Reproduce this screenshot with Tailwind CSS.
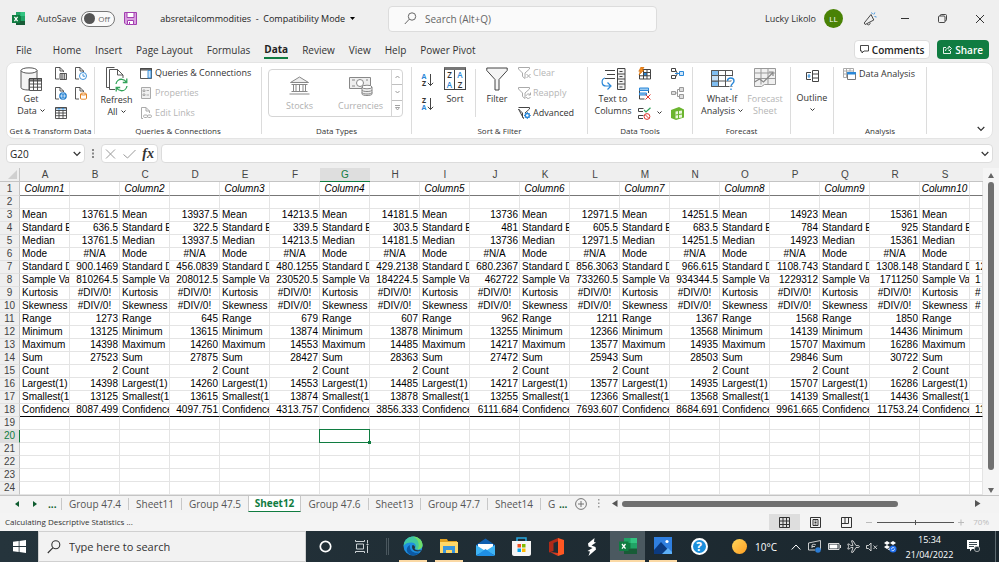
<!DOCTYPE html>
<html lang="en">
<head>
    <meta charset="UTF-8">
    <meta name="viewport" content="width=device-width, initial-scale=1.0">
    <title>absretailcommodities - Excel</title>
    <!-- Tailwind CSS -->
    <script src="https://cdn.jsdelivr.net/npm/@tailwindcss/browser@4"></script>
</head>
<body class="min-h-screen flex flex-col overflow-hidden bg-[#efefef] font-['Open_Sans','Noto_Sans',sans-serif] text-[#333] text-[9px] leading-3">

    <!-- Title bar -->
    <header class="flex items-center h-[37px] shrink-0">
        <div class="flex items-center w-[388px] shrink-0 pl-3">
            <svg class="w-[13px] h-[13px]" viewBox="0 0 13 13"><path fill="#21a366" d="M4 0h9v13H4z"/><path fill="#33c481" d="M8.5 0H13v4H8.5z"/><path fill="#107c41" d="M4 4h5v5H4z"/><path fill="#185c37" d="M4 9h9v4H4z"/><path fill="#107c41" d="M0 3h8v8H0z"/><path stroke="#fff" stroke-width="1.2" d="M2.400 4.800l3.200 4.400M5.600 4.800L2.400 9.200"/></svg>
            <label for="autosave" class="ml-3">AutoSave</label>
            <button id="autosave" role="switch" aria-checked="false" class="ml-[5px] flex items-center gap-[3px] w-[34px] h-4 px-[2px] rounded-full border border-[#777] bg-[#fafafa] text-[#666] text-[8px]"><span class="w-[11px] h-[11px] rounded-full bg-[#555]"></span>Off</button>
            <button class="ml-[9px]" aria-label="Save"><svg class="w-[13px] h-[13px]" viewBox="0 0 13 13"><path fill="#d9a0e0" stroke="#a33fb0" d="M.5.5h12v12H2L.5 11z"/><path fill="#fff" stroke="#a33fb0" d="M3 .5h7v5H3zM3.500 8.500h6v4h-6z"/><path stroke="#a33fb0" d="M5.500 10v2.500"/></svg></button>
            <button class="ml-[23px] flex items-center gap-[5px] whitespace-nowrap text-[#222]"><span>absretailcommodities&nbsp; -&nbsp; Compatibility Mode</span><svg class="w-[5px] h-[3px]" viewBox="0 0 5 3"><path d="M0 0h5L2.500 3z"/></svg></button>
        </div>
        <div class="flex items-center flex-1 max-w-[269px] h-[26px] rounded-sm border border-[#dcdcdc] bg-[#fafafa] pl-[15px]">
            <svg class="w-[13px] h-[13px] shrink-0" viewBox="0 0 13 13" fill="none" stroke="#666"><circle cx="8" cy="4.500" r="3.700"/><path d="M5.300 7.200L.8 12"/></svg>
            <input type="text" aria-label="Search" placeholder="Search (Alt+Q)" class="ml-2 flex-1 min-w-0 text-[10px] placeholder:text-[#666] outline-none">
        </div>
        <div class="ml-auto flex items-center pr-[14px]">
            <span>Lucky Likolo</span>
            <span class="ml-2 flex items-center justify-center w-[19px] h-[19px] rounded-full bg-[#498205] text-white text-[8px]">LL</span>
            <button class="ml-5" aria-label="Coming soon"><svg class="w-[14px] h-[14px]" viewBox="0 0 14 14" fill="none" stroke="#333" stroke-width=".9"><path d="M8 2.500L1.200 11l1 1.500L10.800 8zM4 12c1 1.600 3.500.8 3-1.300"/><path stroke="#2b88d8" d="M8.500.5l1 1.500M11.800.5l-1 2M11.500 4.500l2 .500"/></svg></button>
            <button class="ml-[23px]" aria-label="Minimize"><svg class="w-[10px] h-[10px]" viewBox="0 0 10 10" stroke="#333"><path d="M1 4.500h8"/></svg></button>
            <button class="ml-7" aria-label="Restore"><svg class="w-[9px] h-[9px]" viewBox="0 0 9 9" fill="none" stroke="#333" stroke-width=".9"><rect x=".5" y="2" width="6.500" height="6.500" rx="1"/><path d="M2.200 2V1.500c0-.6.4-1 1-1h4.300c.6 0 1 .4 1 1v4.300c0 .6-.4 1-1 1H7"/></svg></button>
            <button class="ml-7" aria-label="Close"><svg class="w-[10px] h-[10px]" viewBox="0 0 10 10" stroke="#333"><path d="M1 1l8 8M9 1L1 9"/></svg></button>
        </div>
    </header>

    <!-- Ribbon tabs -->
    <nav class="flex items-center h-[25px] shrink-0 pl-4 pr-[10px] gap-[14px] text-[10px] whitespace-nowrap">
        <a href="#" class="mr-[7px]">File</a>
        <a href="#">Home</a>
        <a href="#">Insert</a>
        <a href="#">Page Layout</a>
        <a href="#">Formulas</a>
        <a href="#" class="font-bold text-[#222] border-b-2 border-[#107c41] h-4 mt-[3px]">Data</a>
        <a href="#">Review</a>
        <a href="#">View</a>
        <a href="#">Help</a>
        <a href="#">Power Pivot</a>
        <button class="ml-auto flex items-center gap-[3px] h-[19px] px-[5px] rounded border border-[#ddd] bg-white font-semibold text-[#222]"><svg class="w-[9px] h-[9px]" viewBox="0 0 9 9" fill="none" stroke="#333" stroke-width=".9"><path d="M.5.5h8v5.500H4L2 8V6H.5z"/></svg>Comments</button>
        <button class="-ml-[7px] flex items-center gap-[3px] h-[19px] px-[6px] rounded bg-[#107c41] font-semibold text-white"><svg class="w-[9px] h-[9px]" viewBox="0 0 9 9" fill="none" stroke="#fff" stroke-width=".9"><path d="M3 2.500H.5v6h7V6M2.500 6c.2-2 1.300-3 3.500-3V1l2.500 2.600L6 6V4.500"/></svg>Share</button>
    </nav>

    <!-- Ribbon -->
    <section class="flex shrink-0 mx-[6px] h-[77px] rounded-lg border border-[#e4e4e4] bg-white leading-3 whitespace-nowrap overflow-hidden">
        <div class="w-[87px] shrink-0 flex flex-col">
            <div class="flex h-[60px]">
                <button class="flex flex-col items-center w-[48px] pt-1">
                    <svg class="w-[22px] h-[24px] mb-[2px]" viewBox="0 0 22 24" fill="none" stroke="#444" stroke-width=".9"><path fill="#f3f3f3" d="M1 3.500v17c0 1.500 3 2.500 8 2.500V12h8V3.500"/><ellipse cx="9" cy="3.500" rx="8" ry="2.700" fill="#fff"/><path fill="#fff" d="M9.500 11.500h12v12h-12z"/><path fill="#888" d="M9.500 11.500h12v2.500h-12z"/><path d="M9.500 17h12M9.500 20.200h12M13.500 12v11M17.500 12v11"/></svg>
                    <span>Get</span>
                    <span class="flex items-center gap-[3px]">Data <svg class="w-[5px] h-[4px]" viewBox="0 0 5 4" fill="none" stroke="#333"><path d="M.5.5l2 2 2-2"/></svg></span>
                </button>
                <div class="grid grid-cols-2 gap-x-2 gap-y-[7px] content-start pt-1">
                    <button aria-label="From Text/CSV"><svg class="w-3 h-[13px]" viewBox="0 0 12 13" fill="none" stroke="#444" stroke-width=".9"><path d="M4 12H.5V.5h4.500l3.500 3.500v1M5 .5V4h3.500"/><path fill="#ddd" d="M5 6.500h6.500v6H5z"/><path d="M7 6.500v6M9.300 6.500v6"/></svg></button>
                    <button aria-label="Recent Sources"><svg class="w-3 h-[13px]" viewBox="0 0 12 13" fill="none" stroke="#444" stroke-width=".9"><path d="M4 12H.5V.5h4.500l3.500 3.500v1M5 .5V4h3.500"/><circle cx="8" cy="9" r="3.500" fill="#fff" stroke="#2b88d8"/><path stroke="#2b88d8" d="M8 7v2.200h2"/></svg></button>
                    <button aria-label="From Web"><svg class="w-3 h-[13px]" viewBox="0 0 12 13" fill="none" stroke="#444" stroke-width=".9"><path d="M4 12H.5V.5h4.500l3.500 3.500v1M5 .5V4h3.500"/><circle cx="8" cy="9" r="3.500" fill="#2b88d8" stroke="#1f77c4"/><path stroke="#fff" stroke-width=".6" d="M4.500 9h7M8 5.500c-2 2-2 5 0 7c2-2 2-5 0-7"/></svg></button>
                    <button aria-label="Existing Connections"><svg class="w-3 h-[13px]" viewBox="0 0 12 13" fill="none" stroke="#444" stroke-width=".9"><path d="M4 12H.5V.5h4.500l3.500 3.500v1M5 .5V4h3.500"/><path fill="#fff" stroke="#e07000" d="M5.500 7v4.500c0 1 6 1 6 0V7"/><ellipse cx="8.500" cy="7" rx="3" ry="1" fill="#fff" stroke="#e07000"/></svg></button>
                    <button aria-label="From Table/Range"><svg class="w-3 h-[13px]" viewBox="0 0 12 13" fill="none" stroke="#444" stroke-width=".9"><path d="M.5.5h11v11H.5z"/><path fill="#c9e2f7" d="M.5 1h11v2.500H.5z"/><path d="M.5 6h11M.5 8.700h11M4 3.500v8M8 3.500v8"/><path fill="#2b88d8" stroke="none" d="M3 1h2L4 3zM7 1h2L8 3z"/></svg></button>
                </div>
            </div>
            <div class="text-center text-[8px] leading-[15px]">Get &amp; Transform Data</div>
        </div>
        <div class="w-px bg-[#dcdcdc] my-1 shrink-0"></div>

        <div class="w-[166px] shrink-0 flex flex-col">
            <div class="flex h-[60px]">
                <button class="flex flex-col items-center w-[43px] pt-1">
                    <svg class="w-[22px] h-[25px] mb-[2px]" viewBox="0 0 22 25" fill="none" stroke="#444" stroke-width=".9"><path d="M3.500 20.500h-3V.5h8M9 22.500H3.500v-20h8l5.500 5.500v3M11.500 2.500V8H17"/><path stroke="#33a35a" stroke-width="1.300" d="M10 17c.5-3 3-5 6-4.700 2 .2 3.500 1.200 4.500 3M20.800 11.500v4h-4M21 19c-.5 3-3 5-6 4.700-2-.2-3.500-1.200-4.500-3M10.200 24.500v-4h4"/></svg>
                    <span>Refresh</span>
                    <span class="flex items-center gap-[3px]">All <svg class="w-[5px] h-[4px]" viewBox="0 0 5 4" fill="none" stroke="#333"><path d="M.5.5l2 2 2-2"/></svg></span>
                </button>
                <div class="grid grid-rows-3 ml-[2px] items-center">
                    <button class="flex items-center gap-[3px]"><svg class="w-3 h-[11px]" viewBox="0 0 12 11" fill="none" stroke="#444" stroke-width=".9"><path d="M.5.5h11v10H.5z"/><path fill="#888" d="M.5.5h11v1.500H.5z"/><path fill="#cfe6fa" stroke="#2b88d8" d="M8 2.500h3v7.500H8z"/></svg>Queries &amp; Connections</button>
                    <button class="flex items-center gap-[3px] text-[#b5b5b5]" disabled><svg class="w-3 h-3" viewBox="0 0 12 12" fill="none" stroke="#aaa"><path fill="#f0f0f0" d="M1.500.5h9v11h-9z"/><path d="M3 3h2v1.500H3zM3 7h2v1.500H3zM6.500 3.500H9M6.500 8H9"/></svg>Properties</button>
                    <button class="flex items-center gap-[3px] text-[#b5b5b5]" disabled><svg class="w-3 h-3" viewBox="0 0 12 12" fill="none" stroke="#aaa"><path d="M3 11.500H1.500V.5h4.500l3.500 3.500v2M6 .5V4h3.500"/><rect x="3.500" y="8" width="4" height="2.500" rx="1.200"/><rect x="7.500" y="8" width="4" height="2.500" rx="1.200"/></svg>Edit Links</button>
                </div>
            </div>
            <div class="text-center text-[8px] leading-[15px]">Queries &amp; Connections</div>
        </div>
        <div class="w-px bg-[#dcdcdc] my-1 shrink-0"></div>

        <div class="w-[149px] shrink-0 flex flex-col">
            <div class="h-[60px] pt-[6px] pl-[6px]">
                <div class="flex w-[135px] h-[48px] rounded border border-[#d5d5d5] text-[#b0b0b0]">
                    <button class="flex flex-col items-center justify-end w-[61px] pb-1" disabled><svg class="w-[21px] h-[19px] mb-[5px]" viewBox="0 0 21 19" fill="none" stroke="#888"><path fill="#eee" d="M1.500 6.500L10.500 1l9 5.500z"/><path d="M2.500 8.500h16M4.500 9v6M7 9v6M10.500 9v6M14 9v6M16.500 9v6M2.500 15.500h16M.5 18h20"/></svg>Stocks</button>
                    <button class="flex flex-col items-center justify-end w-[61px] pb-1" disabled><svg class="w-[24px] h-[20px] mb-1" viewBox="0 0 24 20" fill="none" stroke="#888"><path fill="#eee" d="M.5 1.500h21v11H.5z"/><circle cx="11" cy="7" r="3.500" fill="#fff"/><path d="M3 4h3M3 10h3M17 4h2"/><path fill="#eee" d="M13 11v7c0 2 10 2 10 0v-7"/><ellipse cx="18" cy="11" rx="5" ry="1.800" fill="#fff"/><path d="M13 14c0 2 10 2 10 0M13 16.500c0 2 10 2 10 0"/></svg>Currencies</button>
                    <div class="flex-1 grid grid-rows-3 border-l border-[#d5d5d5] divide-y divide-[#c0c0c0]">
                        <button class="flex items-center justify-center" aria-label="Previous row"><svg class="w-[5px] h-[4px]" viewBox="0 0 5 4" fill="none" stroke="#999"><path d="M.5 3l2-2 2 2"/></svg></button>
                        <button class="flex items-center justify-center" aria-label="Next row"><svg class="w-[5px] h-[4px]" viewBox="0 0 5 4" fill="none" stroke="#999"><path d="M.5 1l2 2 2-2"/></svg></button>
                        <button class="flex items-center justify-center" aria-label="More"><svg class="w-[5px] h-[6px]" viewBox="0 0 5 6" fill="none" stroke="#999" stroke-width=".9"><path d="M0 .5h5M.5 2.500h4l-2 2.500z"/></svg></button>
                    </div>
                </div>
            </div>
            <div class="text-center text-[8px] leading-[15px]">Data Types</div>
        </div>
        <div class="w-px bg-[#dcdcdc] my-1 shrink-0"></div>

        <div class="w-[175px] shrink-0 flex flex-col">
            <div class="flex h-[60px]">
                <div class="flex flex-col gap-[10px] pt-[10px] pl-[9px] w-[26px]">
                    <button class="flex" aria-label="Sort A to Z"><span class="flex flex-col text-[7px] leading-[7px] font-bold w-[6px]"><span class="text-[#2b88d8]">A</span><span>Z</span></span><svg class="w-[7px] h-[14px]" viewBox="0 0 7 14" fill="none" stroke="#444"><path d="M3.500 1v11.500M.8 9.800l2.700 2.700 2.700-2.700"/></svg></button>
                    <button class="flex" aria-label="Sort Z to A"><span class="flex flex-col text-[7px] leading-[7px] font-bold w-[6px]"><span>Z</span><span class="text-[#2b88d8]">A</span></span><svg class="w-[7px] h-[14px]" viewBox="0 0 7 14" fill="none" stroke="#444"><path d="M3.500 1v11.500M.8 9.800l2.700 2.700 2.700-2.700"/></svg></button>
                </div>
                <button class="flex flex-col items-center w-[34px] pt-1">
                    <span class="grid grid-cols-2 w-[22px] h-[23px] mb-[3px] border border-[#444] border-t-[3px] border-t-[#777] text-[8px] leading-[9px] font-semibold"><span class="border-r border-[#444]">Z</span><span class="text-[#2b88d8]">A</span><span class="border-r border-[#444] text-[#2b88d8]">A</span><span>Z</span></span>
                    <span>Sort</span>
                </button>
                <div class="w-px bg-[#dcdcdc] my-[6px] ml-[3px]"></div>
                <button class="flex flex-col items-center w-[42px] pt-1">
                    <svg class="w-[22px] h-[24px] mb-[2px]" viewBox="0 0 22 24" fill="#f5f5f5" stroke="#444"><path d="M.8 1h20.400v2.500L13 12.500V23H9V12.500L.8 3.500z"/></svg>
                    <span>Filter</span>
                </button>
                <div class="grid grid-rows-3 items-center">
                    <button class="flex items-center gap-[2px] text-[#b5b5b5]" disabled><svg class="w-[13px] h-3" viewBox="0 0 13 12" fill="none" stroke="#aaa"><path d="M.5.5h11v1.500L7 6v5.500L4.500 9.500V6L.5 2zM8.500 7l4 4M12.500 7l-4 4"/></svg>Clear</button>
                    <button class="flex items-center gap-[2px] text-[#b5b5b5]" disabled><svg class="w-[13px] h-3" viewBox="0 0 13 12" fill="none" stroke="#aaa"><path d="M.5.5h11v1.500L7 6v5.500L4.500 9.500V6L.5 2zM8 9c.5-2 3-3 4.500-1M12.500 5.500v2.500h-2M12.500 10c-1 2-3.500 2-4.500 0"/></svg>Reapply</button>
                    <button class="flex items-center gap-[2px]"><svg class="w-[13px] h-3" viewBox="0 0 13 12" fill="none" stroke="#444"><path d="M.5.5h11v1.500L7 6M5.500 11.500L4.500 9.500V6L.5 2z"/><circle cx="9.300" cy="8.500" r="2" stroke="#2b88d8" stroke-width="1.400"/><path stroke="#2b88d8" d="M9.300 5v1.500M9.300 10.500V12M6 8.500h1.300M11.300 8.500h1.500M7 6.200l1 1M11.600 6.200l-1 1M7 10.800l1-1M11.600 10.800l-1-1"/></svg>Advanced</button>
                </div>
            </div>
            <div class="text-center text-[8px] leading-[15px]">Sort &amp; Filter</div>
        </div>
        <div class="w-px bg-[#dcdcdc] my-1 shrink-0"></div>

        <div class="w-[104px] shrink-0 flex flex-col">
            <div class="flex h-[60px]">
                <button class="flex flex-col items-center w-[50px] pt-1">
                    <svg class="w-[25px] h-[24px] mb-[2px]" viewBox="0 0 25 24" fill="none" stroke="#444"><path d="M4 3.500h10M6 7.500h8M4 11.500h10"/><path fill="#f3f3f3" d="M16.500 1.500h7.500v21h-7.500z"/><path d="M16.500 7h7.500M16.500 12h7.500M16.500 17h7.500M18.500 4.500h3M18.500 9.500h3M18.500 14.500h3M18.500 20h3"/><path stroke="#2b88d8" stroke-width="1.200" d="M4 11c-4 1-4 8 1 8h4M6.500 15.500l3.500 3.500L6.500 22.500"/></svg>
                    <span>Text to</span>
                    <span>Columns</span>
                </button>
                <div class="grid grid-cols-[33px_13px] grid-rows-3 items-center">
                    <button aria-label="Flash Fill"><svg class="w-[13px] h-[13px]" viewBox="0 0 13 13" fill="none" stroke="#444"><path fill="#fff" d="M4 2.500h8.500v9.500H1.500V7"/><path fill="#2b88d8" stroke="none" d="M5 6h4v3H5z"/><path d="M5.500 3v9M9 3v9M2 8.800h10.500M5 5.500h7.500"/><path fill="#f08a24" stroke="#d06a00" stroke-width=".6" d="M3 0h3L4.500 3H6L1 8l1.200-3.700H.8z"/></svg></button>
                    <button aria-label="Consolidate"><svg class="w-[13px] h-[11px]" viewBox="0 0 13 11" fill="none" stroke="#444"><path d="M.5.5h4v3h-4zM.5 7.500h4v3h-4zM4.500 2l2 3.500-2 3.500"/><path fill="#cfe6fa" stroke="#2b88d8" d="M8.500 3.500h4v4h-4zM4 5.500h4"/></svg></button>
                    <button aria-label="Remove Duplicates"><svg class="w-[13px] h-[13px]" viewBox="0 0 13 13" fill="none" stroke="#444"><path d="M1.500 1v11h5M10.500 1v5"/><path fill="#9ccbf2" stroke="#2b88d8" d="M1.500 1h9v2.500h-9zM1.500 6h7v2h-7z"/><path stroke="#e03c31" d="M7.500 7.500l5 5M12.500 7.500l-5 5"/></svg></button>
                    <button aria-label="Relationships" disabled><svg class="w-[13px] h-[12px]" viewBox="0 0 13 12" fill="#ddd" stroke="#999"><path d="M.5 4.500h4v3h-4zM8.500.5h4v4h-4zM8.500 7.500h4v4h-4z"/><path fill="none" d="M4.500 6h2V2.500h2M6.500 6v3.500h2"/></svg></button>
                    <button class="flex items-center gap-[6px]" aria-label="Data Validation"><svg class="w-[13px] h-[13px]" viewBox="0 0 13 13" fill="none" stroke="#444"><path d="M5.500 1.500H.5V4.500h4.500M5.500 8.500H.5v3h4.500"/><path stroke="#33a35a" stroke-width="1.200" d="M6 3l2 2L12.500.7"/><circle cx="9" cy="9.500" r="2.900" stroke="#e03c31"/><path stroke="#e03c31" d="M7 7.500l4 4"/></svg><svg class="w-[5px] h-[4px]" viewBox="0 0 5 4" fill="none" stroke="#333"><path d="M.5.5l2 2 2-2"/></svg></button>
                    <button aria-label="Manage Data Model"><svg class="w-[13px] h-[13px]" viewBox="0 0 13 13"><path fill="#6bb52f" d="M0 3L8 0l5 2.500v8L5 13 0 11z"/><path fill="#e9f6dc" d="M4.500 4.500L11 3.500v7L4.500 11.500z"/><path fill="none" stroke="#6bb52f" d="M4.500 8l6.500-1M7.500 4v7"/></svg></button>
                </div>
            </div>
            <div class="text-center text-[8px] leading-[15px]">Data Tools</div>
        </div>
        <div class="w-px bg-[#dcdcdc] my-1 shrink-0"></div>

        <div class="w-[97px] shrink-0 flex flex-col">
            <div class="flex h-[60px] pl-[6px]">
                <button class="flex flex-col items-center w-[46px] pt-1">
                    <svg class="w-[25px] h-[24px] mb-[2px]" viewBox="0 0 25 24" fill="none" stroke="#555"><path fill="#fff" d="M1.500 3.500h21v16h-21z"/><path fill="#7fbdf0" d="M1.500 3.500h7v5h-7zM1.500 14h7v5.500h-7z"/><path fill="#c5e0f7" d="M1.500 8.500h7V14h-7z"/><path d="M8.500 8.500h14M8.500 14h14M15.500 3.500v16"/><path stroke="#fff" stroke-width="4" d="M18 13.500c0-3.500 6-3.500 6 0 0 2.500-3 2-3 6"/><path stroke="#2b88d8" stroke-width="1.400" d="M17.500 14c0-4 6.500-4 6.500 0 0 2.500-3 2.500-3 5.500M21 21.500v1.500"/></svg>
                    <span>What-If</span>
                    <span class="flex items-center gap-[3px]">Analysis <svg class="w-[5px] h-[4px]" viewBox="0 0 5 4" fill="none" stroke="#333"><path d="M.5.5l2 2 2-2"/></svg></span>
                </button>
                <button class="flex flex-col items-center w-[40px] pt-1 text-[#b5b5b5]" disabled>
                    <svg class="w-[24px] h-[24px] mb-[2px]" viewBox="0 0 24 24" fill="none" stroke="#999"><path fill="#f0f0f0" d="M1.500 1.500h21v16h-11l-3 2h-7z"/><path d="M1.500 6h21M1.500 11.500h21M8 1.500v16M15 1.500v16"/><path stroke="#888" stroke-width="1.200" d="M1.500 15l5-3 4 3 9-9M16 5h4v4"/></svg>
                    <span>Forecast</span>
                    <span>Sheet</span>
                </button>
            </div>
            <div class="text-center text-[8px] leading-[15px]">Forecast</div>
        </div>
        <div class="w-px bg-[#dcdcdc] my-1 shrink-0"></div>

        <div class="w-[42px] shrink-0">
            <button class="flex flex-col items-center w-full pt-[7px]">
                <svg class="w-[13px] h-[12px] mb-[10px]" viewBox="0 0 13 12" fill="none" stroke="#444"><path d="M5 2.500H.5v7H5M6.500.5h6v11h-6zM6.500 4h6M6.500 8h6"/><path stroke="#2b88d8" d="M3 4v4M1.500 6h3"/></svg>
                <span>Outline</span>
                <svg class="w-[5px] h-[4px] mt-1" viewBox="0 0 5 4" fill="none" stroke="#333"><path d="M.5.5l2 2 2-2"/></svg>
            </button>
        </div>
        <div class="w-px bg-[#dcdcdc] my-1 shrink-0"></div>

        <div class="w-[92px] shrink-0 flex flex-col">
            <div class="h-[60px] pl-[9px]">
                <button class="flex items-center gap-[3px] h-[21px]"><svg class="w-[13px] h-3" viewBox="0 0 13 12" fill="none" stroke="#aaa"><path d="M.5.5h10v9H.5zM.5 3h10M.5 6h5M3.500.5v9M7 .5v3"/><path fill="#fff" stroke="#777" d="M4.500 4.500h8v7h-8z"/><path fill="#2b88d8" stroke="#2b88d8" d="M4.500 4.500h8v1.500h-8z"/></svg>Data Analysis</button>
            </div>
            <div class="text-center text-[8px] leading-[15px]">Analysis</div>
        </div>
        <div class="w-px bg-[#dcdcdc] my-1 shrink-0"></div>
        <button class="ml-auto self-end mr-[7px] mb-[6px]" aria-label="Collapse ribbon"><svg class="w-[8px] h-[6px]" viewBox="0 0 8 6" fill="none" stroke="#333" stroke-width="1.200"><path d="M.7 1l3.300 3.500L7.300 1"/></svg></button>
    </section>

    <!-- Formula bar -->
    <section class="flex items-center shrink-0 h-[29px] mx-[6px]">
        <div class="flex items-center w-[79px] h-[19px] rounded border border-[#dcdcdc] bg-white pl-[3px] pr-[3px]">
            <input type="text" aria-label="Name box" value="G20" class="flex-1 min-w-0 text-[10px] text-[#222] outline-none">
            <svg class="w-[8px] h-[6px]" viewBox="0 0 8 6" fill="none" stroke="#333" stroke-width="1.200"><path d="M.7 1l3.300 3.500L7.300 1"/></svg>
        </div>
        <svg class="w-[2px] h-[9px] mx-[7px]" viewBox="0 0 2 9" fill="#888"><path d="M0 0h2v2H0zM0 3.500h2v2H0zM0 7h2v2H0z"/></svg>
        <div class="flex items-center justify-between w-[57px] h-[19px] rounded border border-[#dcdcdc] bg-white px-[3px]">
            <button aria-label="Cancel"><svg class="w-[11px] h-[10px]" viewBox="0 0 11 10" stroke="#999"><path d="M1 .5l9 9M10 .5l-9 9"/></svg></button>
            <button aria-label="Enter"><svg class="w-[13px] h-[10px]" viewBox="0 0 13 10" fill="none" stroke="#999"><path d="M.5 5.500L4.500 9l8-8"/></svg></button>
            <button class="font-['Liberation_Serif',serif] italic font-bold text-[14px]" aria-label="Insert function">fx</button>
        </div>
        <div class="flex items-center flex-1 h-[19px] ml-[3px] rounded border border-[#dcdcdc] bg-white pr-[3px]">
            <input type="text" aria-label="Formula" class="flex-1 min-w-0 outline-none">
            <svg class="w-[8px] h-[6px]" viewBox="0 0 8 6" fill="none" stroke="#333" stroke-width="1.200"><path d="M.7 1l3.300 3.500L7.300 1"/></svg>
        </div>
    </section>

    <!-- Worksheet -->
    <main class="flex flex-1 min-h-0 border-b border-[#c4c4c4] font-['Liberation_Sans',Arial,sans-serif]">
        <div class="flex-1 min-w-0 overflow-hidden bg-white">
            <table class="w-full table-fixed border-separate border-spacing-0 text-[10px] leading-3 text-black whitespace-nowrap">
                <colgroup id="cols"></colgroup>
                <thead><tr id="head"></tr></thead>
                <tbody id="rows"></tbody>
            </table>
        </div>
        <!-- Vertical scroll bar -->
        <div class="w-4 shrink-0 flex flex-col items-center bg-[#f5f5f5] pt-[5px] pb-[2px]">
            <svg class="w-[6px] h-[5px]" viewBox="0 0 6 5" fill="#666"><path d="M3 0l3 5H0z"/></svg>
            <div class="w-[6px] flex-1 mt-1 mb-[18px] rounded-full bg-[#707070]"></div>
            <svg class="w-[6px] h-[5px]" viewBox="0 0 6 5" fill="#666"><path d="M0 0h6L3 5z"/></svg>
        </div>
    </main>

    <!-- Sheet tabs -->
    <nav class="flex items-center shrink-0 h-[17px] pb-[2px] bg-[#f3f3f3] text-[10px] text-[#555] whitespace-nowrap">
        <div class="flex items-center w-[61px] pl-[15px] gap-[14px]">
            <svg class="w-1 h-[6px]" viewBox="0 0 4 6" fill="#0e5c2f"><path d="M4 0v6L0 3z"/></svg>
            <svg class="w-1 h-[6px]" viewBox="0 0 4 6" fill="#0e5c2f"><path d="M0 0v6l4-3z"/></svg>
            <span class="-ml-[3px] font-bold text-[#0e5c2f]">...</span>
        </div>
        <a href="#" class="w-[67px] text-center border-l border-[#c8c8c8]">Group 47.4</a>
        <a href="#" class="w-[53px] text-center border-l border-[#c8c8c8]">Sheet11</a>
        <a href="#" class="w-[67px] text-center border-l border-[#c8c8c8]">Group 47.5</a>
        <a href="#" class="w-[53px] h-4 self-start text-center leading-[15px] bg-white border-x border-b border-x-[#c8c8c8] border-b-[#107c41] font-bold text-[#107c41]">Sheet12</a>
        <a href="#" class="w-[67px] text-center">Group 47.6</a>
        <a href="#" class="w-[52px] text-center border-l border-[#c8c8c8]">Sheet13</a>
        <a href="#" class="w-[67px] text-center border-l border-[#c8c8c8]">Group 47.7</a>
        <a href="#" class="w-[53px] text-center border-l border-[#c8c8c8]">Sheet14</a>
        <a href="#" class="w-[35px] pl-[7px] border-l border-[#c8c8c8]">G <b class="ml-px text-[#0e5c2f]">...</b></a>
        <button aria-label="New sheet"><svg class="w-3 h-3" viewBox="0 0 12 12" fill="none" stroke="#666" stroke-width=".9"><circle cx="6" cy="6" r="5.400"/><path d="M3 6h6M6 3v6"/></svg></button>
        <svg class="w-[2px] h-[9px] ml-[11px]" viewBox="0 0 2 9" fill="#999"><path d="M0 0h1.500v1.500H0zM0 3.500h1.500V5H0zM0 7h1.500v1.500H0z"/></svg>
        <div class="flex-1 flex items-center ml-3 pr-[18px]">
            <svg class="w-[6px] h-[7px]" viewBox="0 0 6 7" fill="#555"><path d="M5.500 0v7L0 3.500z"/></svg>
            <div class="w-[276px] h-[6px] ml-1 rounded-full bg-[#707070]"></div>
            <svg class="w-[6px] h-[7px] ml-auto" viewBox="0 0 6 7" fill="#555"><path d="M0 0v7l5.500-3.500z"/></svg>
        </div>
    </nav>

    <!-- Status bar -->
    <footer class="flex items-center shrink-0 h-[18px] bg-[#f4f4f4] pl-[5px] pr-[10px] text-[8px]">
        <span>Calculating Descriptive Statistics ...</span>
        <button class="ml-auto flex items-center justify-center w-[31px] h-4 bg-[#dedede]" aria-label="Normal"><svg class="w-[11px] h-[11px]" viewBox="0 0 11 11" fill="none" stroke="#333"><path d="M.5.5h10v10H.5zM.5 4h10M.5 7.500h10M4 .5v10M7.500.5v10"/></svg></button>
        <button class="flex items-center justify-center w-[31px] h-4" aria-label="Page Layout"><svg class="w-[11px] h-[11px]" viewBox="0 0 11 11" fill="none" stroke="#333"><path d="M.5.5h10v10H.5zM3 2.500h5v6H3zM4.500 4h2M4.500 5.500h2M4.500 7h2"/></svg></button>
        <button class="flex items-center justify-center w-[31px] h-4" aria-label="Page Break Preview"><svg class="w-[11px] h-[11px]" viewBox="0 0 11 11" fill="none" stroke="#333"><path d="M.5.5h10v10H.5zM.5 6.500h7v-6M4 .5v6"/></svg></button>
        <svg class="w-[6px] h-[7px] ml-1" viewBox="0 0 6 7" stroke="#bbb"><path d="M0 3.500h6"/></svg>
        <svg class="w-[77px] h-[7px] ml-[5px]" viewBox="0 0 77 7" stroke="#555"><path d="M0 3.500h77M38.500 1v5"/></svg>
        <svg class="w-[6px] h-[7px] ml-1" viewBox="0 0 6 7" stroke="#bbb"><path d="M0 3.500h6M3 .5v6"/></svg>
        <span class="ml-[9px] text-[#bbb]">70%</span>
    </footer>

    <!-- Windows taskbar -->
    <footer class="flex items-stretch shrink-0 h-[31px] bg-linear-to-r from-[#25343c] to-[#1a262d] text-white text-[9px]">
        <button class="flex items-center justify-center w-[38px]" aria-label="Start"><svg class="w-[13px] h-[13px]" viewBox="0 0 13 13" fill="#fff"><path d="M0 1.800L5.700 1v5H0zM6.500.9L13 0v6H6.500zM0 6.900h5.700v5L0 11.200zM6.500 6.900H13V13l-6.500-.9z"/></svg></button>
        <div class="flex items-center w-[268px] bg-[#f2f2f2] border border-[#d0d0d0] pl-2">
            <svg class="w-[14px] h-[14px]" viewBox="0 0 14 14" fill="none" stroke="#333" stroke-width="1.100"><circle cx="8.800" cy="4.800" r="4"/><path d="M5.800 7.800L.8 13"/></svg>
            <input type="text" aria-label="Taskbar search" placeholder="Type here to search" class="ml-2 flex-1 min-w-0 text-[11px] placeholder:text-[#333] outline-none">
        </div>
        <button class="flex items-center justify-center w-[38px]" aria-label="Cortana"><svg class="w-[13px] h-[13px]" viewBox="0 0 13 13" fill="none" stroke="#fff" stroke-width="1.700"><circle cx="6.500" cy="6.500" r="5.200"/></svg></button>
        <button class="flex items-center justify-center w-[36px]" aria-label="Task View"><svg class="w-[14px] h-[13px]" viewBox="0 0 14 13" fill="none" stroke="#ccd2d5"><path d="M.5 0v1.500h9V0M1.500 4h7v5h-7zM.5 13v-1.500h9V13M12.500 0v3M12.500 6v7"/><path fill="#ccd2d5" d="M12 4h1v1h-1z"/></svg></button>
        <div class="w-[3px] my-[7px] mx-[6px] border-x border-[#4a575e]"></div>
        <div class="flex items-stretch">
            <button class="flex items-center justify-center w-7 mx-1 border-b-2 border-[#fbd9a5]" aria-label="Edge"><svg class="w-[20px] h-[20px]" viewBox="0 0 20 20"><circle cx="10" cy="10" r="9.500" fill="#1e8fe0"/><path fill="#41c8a0" d="M1 7C3 2.500 6.500.5 10 .5c6 0 9.500 4.500 9.500 8.500 0 3-2.500 4.500-5 4.500-2 0-3-1-2-2 1-2-.5-5-4-5C5 6.500 2 7.500.6 10z"/><path fill="#6fdc6a" d="M10 .5c6 0 9.500 4.500 9.500 8.500 0 3-2.500 4.500-5 4.500C17 10 16 3 10 .5z"/><path fill="#0c59a4" d="M7 9c-1 5 3 9 9.500 7.500-3 3.500-8 3.800-11 1C2.500 14.500 3.500 10.500 7 9z"/><path fill="#25343c" d="M9.500 9c-1.500 3 1 6.500 5 6.500 2 0 3.500-1 4-1.500-1 .2-2 .3-3.500.3-3 0-4-1.300-3-2.800 0-1.500-1-2.500-2.500-2.500z"/></svg></button>
            <button class="flex items-center justify-center w-7 mx-1 border-b-2 border-[#fbd9a5]" aria-label="File Explorer"><svg class="w-[18px] h-[15px]" viewBox="0 0 18 15"><path fill="#e0a020" d="M0 1h7l1 2h9v3H0z"/><path fill="#ffd768" d="M0 4h18v11H0z"/><path fill="#3a96dd" d="M3 8h12v7h-3v-3H6v3H3z"/></svg></button>
            <button class="flex items-center justify-center w-9" aria-label="Mail"><svg class="w-[19px] h-[18px]" viewBox="0 0 19 18"><path fill="#0f5fb0" d="M0 7l9.500-6.500L19 7v3H0z"/><path fill="#fff" d="M2 6h15v6H2z"/><path fill="#3fb4f5" d="M0 7l9.500 6L0 17.500zM19 7l-9.500 6 9.500 4.500z"/><path fill="#1f8fe5" d="M0 18l9.500-7L19 18z"/></svg></button>
            <button class="flex items-center justify-center w-9" aria-label="Microsoft Store"><svg class="w-[19px] h-[19px]" viewBox="0 0 19 19"><path fill="none" stroke="#29a8e0" stroke-width="1.500" d="M5 5V1h9v4"/><path fill="#f5f5f5" d="M0 4h19v13c0 1-1 2-2 2H2c-1 0-2-1-2-2z"/><path fill="#f25022" d="M5.500 7h3.500v3.500H5.500z"/><path fill="#7fba00" d="M10 7h3.500v3.500H10z"/><path fill="#00a4ef" d="M5.500 11.500h3.500V15H5.500z"/><path fill="#ffb900" d="M10 11.500h3.500V15H10z"/></svg></button>
            <button class="flex items-center justify-center w-[35px]" aria-label="Office"><svg class="w-[15px] h-[18px]" viewBox="0 0 15 18"><path fill="#b02a18" d="M0 4l9-4 1 3-5.500 2v8L0 14.500z"/><path fill="#ff5722" d="M9 0l6 2v14l-6 2z"/><path fill="#d83b20" d="M1 14l8 1v3z"/></svg></button>
            <button class="flex items-center justify-center w-[36px]" aria-label="Studio"><svg class="w-[10px] h-[18px]" viewBox="0 0 10 18" fill="#fff"><path d="M7.500 0L1 5.500l.5 3L5.500 10 .5 13l2.500.5L1.500 18 9 11.500 8.500 9 4.500 7.500 9 4.500 7 4z"/></svg></button>
            <button class="flex items-center justify-center w-[35px] bg-[#4b5960] border-b-2 border-[#fbd9a5]" aria-label="Excel"><svg class="w-[18px] h-[16px]" viewBox="0 0 18 16"><path fill="#21a366" d="M5 0h13v16H5z"/><path fill="#33c481" d="M11.500 0H18v5h-6.500z"/><path fill="#107c41" d="M5 5h6.500v5.500H5z"/><path fill="#185c37" d="M5 10.500h13V16H5z"/><path fill="#107c41" d="M0 3.500h9.500v9.500H0z"/><path stroke="#fff" stroke-width="1.300" d="M3 6l3.500 4.700M6.500 6L3 10.700"/></svg></button>
            <button class="flex items-center justify-center w-7 mx-1 border-b-2 border-[#fbd9a5]" aria-label="Photos"><svg class="w-[18px] h-[17px]" viewBox="0 0 18 17"><path fill="#2f7fe0" d="M0 0h18v17H0z"/><path fill="#0b3a80" d="M0 13l7-8 11 12H0z"/><path fill="#5db0f8" d="M8 17l6-6 4 4v2z"/><circle cx="13" cy="4.500" r="1.600" fill="#fff"/></svg></button>
            <button class="flex items-center justify-center w-9" aria-label="Get Help"><span class="flex items-center justify-center w-[17px] h-[17px] rounded-full border-2 border-white bg-[#1b8fdc] text-[12px] font-bold">?</span></button>
        </div>
        <div class="ml-auto flex items-center">
            <span class="w-[15px] h-[15px] rounded-full bg-linear-to-br from-[#ffd75a] to-[#ff9d1c]"></span>
            <span class="ml-2 w-[22px] text-[10px] whitespace-nowrap">10°C</span>
            <svg class="w-[10px] h-[6px] ml-[14px]" viewBox="0 0 10 6" fill="none" stroke="#fff"><path d="M.7 5.500L5 1l4.300 4.500"/></svg>
            <svg class="w-[14px] h-[13px] ml-[7px]" viewBox="0 0 14 13" fill="none" stroke="#ddd" stroke-width=".9"><path d="M.5 3l12-2.500V10M.5 3v7H7M4 8V5c2-1.500 4 0 4 0M4 6.500h3"/><circle cx="10" cy="10" r="2.800" fill="#2b7cd3" stroke="none"/></svg>
            <svg class="w-[13px] h-[7px] ml-[6px]" viewBox="0 0 13 7" fill="none" stroke="#ddd"><path d="M.5.5h10.500v6H.5zM12.500 2v3"/><path fill="#fff" stroke="none" d="M1.500 1.500h8v4h-8z"/></svg>
            <svg class="w-[13px] h-[13px] ml-[6px]" viewBox="0 0 13 13" fill="none" stroke="#ddd" stroke-width=".9"><path d="M.8 4h1.500l1.500 1.600h2.200L4.500.8h1.500l3 4.800h2.200c1.600 0 1.600 1.900 0 1.900H9l-3 4.800H4.500L6 7.500H3.800L2.300 9H.8l.8-2.500z"/></svg>
            <svg class="w-[12px] h-[10px] ml-[6px]" viewBox="0 0 12 10" fill="none" stroke="#ddd" stroke-width=".9"><path d="M.5 3.500H2.500L5 1v8L2.500 6.500H.5zM7.500 3.500l3.500 3.500M11 3.500L7.500 7"/></svg>
            <svg class="w-[13px] h-[13px] ml-[6px]" viewBox="0 0 13 13" fill="#fff"><path d="M3 1l3 2-3 2-3-2zM9 1l3 2-3 2-3-2zM3 5l3 2-3 2-3-2zM6 8l2 1.200L6 10.500 3.500 9.200z"/><circle cx="9" cy="9" r="3.500" fill="#1f6ff0"/><path fill="none" stroke="#fff" stroke-width=".8" d="M7.500 9c.3-1.500 2-2 3-.8M10.500 9.200c-.3 1.500-2 2-3 .8"/></svg>
            <div class="flex flex-col items-center w-[53px] ml-[6px] leading-[15px]"><span>15:34</span><span>21/04/2022</span></div>
            <svg class="w-[13px] h-[13px] ml-[11px]" viewBox="0 0 13 13"><path fill="#fff" d="M0 0h12v9H5l-2 2.500V9H0z"/><path stroke="#25343c" stroke-width=".9" d="M2 2.500h8M2 4.500h8M2 6.500h5"/><circle cx="10" cy="9" r="2.700" fill="#25343c" stroke="#ccc" stroke-width=".7"/></svg>
            <div class="w-px h-full ml-[15px] mr-[3px] bg-[#5d6a70]"></div>
        </div>
    </footer>

    <script>
        const letters = 'ABCDEFGHIJKLMNOPQRS'.split('');
        const labels = ['Mean', 'Standard Error', 'Median', 'Mode', 'Standard Deviation', 'Sample Variance', 'Kurtosis', 'Skewness', 'Range', 'Minimum', 'Maximum', 'Sum', 'Count', 'Largest(1)', 'Smallest(1)', 'Confidence Level'];
        // mean, std error, std deviation, variance, range, min, max, sum, confidence
        const stats = [
            ['13761.5', '636.5', '900.1469', '810264.5', '1273', '13125', '14398', '27523', '8087.499'],
            ['13937.5', '322.5', '456.0839', '208012.5', '645', '13615', '14260', '27875', '4097.751'],
            ['14213.5', '339.5', '480.1255', '230520.5', '679', '13874', '14553', '28427', '4313.757'],
            ['14181.5', '303.5', '429.2138', '184224.5', '607', '13878', '14485', '28363', '3856.333'],
            ['13736', '481', '680.2367', '462722', '962', '13255', '14217', '27472', '6111.684'],
            ['12971.5', '605.5', '856.3063', '733260.5', '1211', '12366', '13577', '25943', '7693.607'],
            ['14251.5', '683.5', '966.615', '934344.5', '1367', '13568', '14935', '28503', '8684.691'],
            ['14923', '784', '1108.743', '1229312', '1568', '14139', '15707', '29846', '9961.665'],
            ['15361', '925', '1308.148', '1711250', '1850', '14436', '16286', '30722', '11753.24']
        ];
        const lastColumn = { 7: '12', 8: '1', 9: '#', 10: '#', 18: '11' };

        function column(s) {
            return [s[0], s[1], s[0], '#N/A', s[2], s[3], '#DIV/0!', '#DIV/0!', s[4], s[5], s[6], s[7], '2', s[6], s[5], s[8]];
        }
        const values = stats.map(column);

        document.getElementById('cols').innerHTML = '<col class="w-[20px]">' + letters.map(() => '<col class="w-[50px]">').join('') + '<col>';

        // Column letters
        let head = '<th class="h-[14px] p-0 bg-[#efefef] border-r border-b border-[#c4c4c4]"><svg class="w-[9px] h-[9px] ml-auto mr-[2px]" viewBox="0 0 9 9" fill="#d0d0d0"><path d="M9 0v9H0z"/></svg></th>';
        for (const letter of letters) {
            head += letter === 'G'
                ? '<th class="p-0 font-normal bg-[#dedede] text-[#107c41] border-b border-[#107c41]">G</th>'
                : `<th class="p-0 font-normal bg-[#efefef] text-[#444] border-b border-[#c4c4c4]">${letter}</th>`;
        }
        document.getElementById('head').innerHTML = head + '<th class="p-0 bg-[#efefef] border-b border-[#c4c4c4]"></th>';

        function cellText(row, col) {
            if (col === 19) return lastColumn[row] || '';
            if (row === 1) return col % 2 ? '' : 'Column' + (col / 2 + 1);
            if (row < 3 || row > 18) return '';
            return col % 2 ? values[(col - 1) / 2][row - 3] : labels[row - 3];
        }

        let body = '';
        for (let row = 1; row <= 24; row++) {
            const height = row === 1 ? 'h-[14px]' : 'h-[13px]';
            let line = 'border-b-[#e4e4e4]';
            if (row === 1) line = 'border-b-[#777]';
            if (row === 18) line = 'border-b-black';
            body += row === 20
                ? '<tr><th class="h-[13px] p-0 font-normal bg-[#dedede] text-[#107c41] border-b border-r border-b-[#dedede] border-r-[#107c41]">20</th>'
                : `<tr><th class="${height} p-0 font-normal bg-[#efefef] text-[#444] border-b border-r border-b-[#e1e1e1] border-r-[#c4c4c4]">${row}</th>`;
            for (let col = 0; col < 20; col++) {
                if (row === 20 && col === 6) {
                    body += '<td class="relative p-0 border-r border-b border-[#e4e4e4]"><div class="absolute -top-px -left-px -right-px -bottom-px border border-[#107c41]"></div><div class="absolute -right-[2px] -bottom-[2px] w-[3px] h-[3px] bg-[#107c41]"></div></td>';
                    continue;
                }
                const text = cellText(row, col);
                let align = 'text-left pl-[2px]';
                if (row === 1) align = 'text-center italic';
                else if (col === 19) align = 'text-left pl-[5px]';
                else if (text[0] === '#') align = 'text-center';
                else if (col % 2) align = 'text-right pr-px';
                body += `<td class="p-0 overflow-hidden border-r border-b border-r-[#e4e4e4] ${line} ${align}">${text}</td>`;
            }
            body += '</tr>';
        }
        document.getElementById('rows').innerHTML = body;
    </script>
</body>
</html>
